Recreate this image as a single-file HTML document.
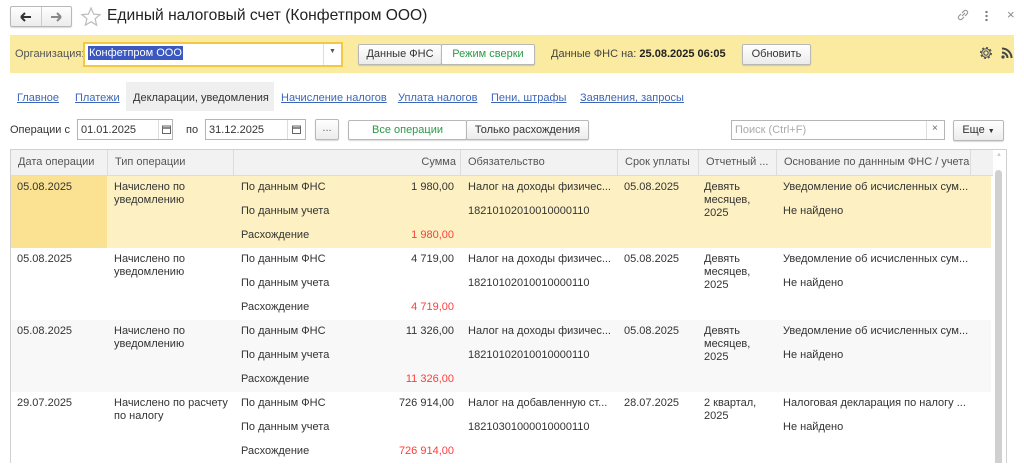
<!DOCTYPE html>
<html><head><meta charset="utf-8"><style>
*{box-sizing:border-box;margin:0;padding:0}
body{width:1024px;height:463px;overflow:hidden;background:#fff;font-family:"Liberation Sans",Arial,sans-serif;font-size:11px;color:#333;position:relative}
.a{position:absolute;white-space:nowrap}
.btn{position:absolute;border:1px solid #b8b8b8;border-radius:2px;background:linear-gradient(#fff,#ececec);box-shadow:0 1px 1px rgba(0,0,0,.15);text-align:center;color:#333}
.lnk{position:absolute;color:#3c66b8;text-decoration:underline;white-space:nowrap}
.inp{position:absolute;border:1px solid #b5b5b5;background:#fff}
.g{color:#2a9a48}
.red{color:#ff3c3c}
.row{position:absolute;left:11px;width:980px;height:72px}
.hd{position:absolute;top:149px;left:10px;width:996px;height:27px;background:#f2f2f2;border:1px solid #d0d0d0;border-bottom:1px solid #dcdcdc}
.hc{position:absolute;top:0;height:26px;line-height:25px;border-right:1px solid #dcdcdc;color:#555;padding-left:7px;overflow:hidden}
</style></head><body>
<div class="btn" style="left:10px;top:6px;width:62px;height:21px;"></div>
<div class="a" style="left:41px;top:7px;width:1px;height:19px;background:#ccc"></div>
<svg class="a" style="left:17px;top:10px" width="50" height="14"><path d="M4 7h10M4 7l4-4M4 7l4 4" stroke="#333" stroke-width="2" fill="none"/><path d="M44 7H34M44 7l-4-4M44 7l-4 4" stroke="#888" stroke-width="2" fill="none"/></svg>
<svg class="a" style="left:80px;top:6px" width="22" height="22"><path d="M11 2l2.6 6.1 6.4.5-4.9 4.2 1.5 6.3L11 15.7 5.4 19.1l1.5-6.3L2 8.6l6.4-.5z" fill="none" stroke="#bbb" stroke-width="1.2"/></svg>
<div class="a" style="left:107px;top:7px;font-size:15.6px;color:#222">Единый налоговый счет (Конфетпром ООО)</div>
<svg class="a" style="left:956px;top:8px" width="14" height="14"><path d="M6 8l3-3M5 6L3 8a2 2 0 003 3l2-2M9 8l2-2a2 2 0 00-3-3L6 5" stroke="#999" stroke-width="1.2" fill="none"/></svg>
<div class="a" style="left:985px;top:10px;width:3px;height:12px;background:radial-gradient(circle,#777 1.1px,transparent 1.3px) 0 0/3px 4px"></div>
<div class="a" style="left:1007px;top:7px;color:#888;font-size:13px">×</div>
<div class="a" style="left:10px;top:35px;width:1004px;height:38px;background:#fbeba0"></div>
<div class="a" style="left:15px;top:48px;color:#555">Организация:</div>
<div class="a" style="left:83px;top:42px;width:260px;height:25px;border:2px solid #f5c842;background:#fff"></div>
<div class="a" style="left:323px;top:44px;width:1px;height:21px;background:#ddd"></div>
<div class="a" style="left:329px;top:48px;font-size:7px;color:#555">▼</div>
<div class="a" style="left:88px;top:46px;background:#3a58c0;color:#fff;padding:1px 1px;font-size:11px">Конфетпром ООО</div>
<div class="btn" style="left:358px;top:44px;width:84px;height:21px;line-height:19px">Данные ФНС</div>
<div class="btn g" style="left:441px;top:44px;width:94px;height:21px;line-height:19px;background:#fff">Режим сверки</div>
<div class="a" style="left:551px;top:48px;color:#444">Данные ФНС на: <b style="color:#222">25.08.2025 06:05</b></div>
<div class="btn" style="left:742px;top:44px;width:69px;height:21px;line-height:19px">Обновить</div>
<svg class="a" style="left:979px;top:46px" width="14" height="14"><circle cx="7" cy="7" r="2.2" fill="none" stroke="#555" stroke-width="1.2"/><circle cx="7" cy="7" r="5" fill="none" stroke="#555" stroke-width="2" stroke-dasharray="2 1.9"/><circle cx="7" cy="7" r="4.2" fill="none" stroke="#555" stroke-width="1"/></svg>
<svg class="a" style="left:1001px;top:47px" width="12" height="12"><circle cx="2" cy="10" r="1.6" fill="#444"/><path d="M1 5.5a5.5 5.5 0 015.5 5.5M1 1.5a9.5 9.5 0 019.5 9.5" stroke="#444" stroke-width="2" fill="none"/></svg>
<div class="lnk" style="left:17px;top:92px">Главное</div>
<div class="lnk" style="left:75px;top:92px">Платежи</div>
<div class="a" style="left:126px;top:82px;width:148px;height:29px;background:#efefef"></div>
<div class="a" style="left:133px;top:92px;color:#333">Декларации, уведомления</div>
<div class="lnk" style="left:281px;top:92px">Начисление налогов</div>
<div class="lnk" style="left:398px;top:92px">Уплата налогов</div>
<div class="lnk" style="left:491px;top:92px">Пени, штрафы</div>
<div class="lnk" style="left:580px;top:92px">Заявления, запросы</div>
<div class="a" style="left:10px;top:124px;color:#333">Операции с</div>
<div class="inp" style="left:77px;top:119px;width:96px;height:21px"></div>
<div class="a" style="left:81px;top:124px">01.01.2025</div>
<div class="a" style="left:158px;top:120px;width:1px;height:19px;background:#ddd"></div>
<svg class="a" style="left:162px;top:125px" width="9" height="9"><rect x=".5" y="1" width="8" height="7.5" fill="none" stroke="#666"/><path d="M.5 3h8" stroke="#666" stroke-width="1.5"/></svg>
<div class="a" style="left:186px;top:124px">по</div>
<div class="inp" style="left:205px;top:119px;width:101px;height:21px"></div>
<div class="a" style="left:209px;top:124px">31.12.2025</div>
<div class="a" style="left:287px;top:120px;width:1px;height:19px;background:#ddd"></div>
<svg class="a" style="left:292px;top:125px" width="9" height="9"><rect x=".5" y="1" width="8" height="7.5" fill="none" stroke="#666"/><path d="M.5 3h8" stroke="#666" stroke-width="1.5"/></svg>
<div class="btn" style="left:315px;top:119px;width:24px;height:21px;line-height:17px;color:#666">...</div>
<div class="btn g" style="left:348px;top:120px;width:119px;height:20px;line-height:18px;background:#fff">Все операции</div>
<div class="btn" style="left:466px;top:120px;width:123px;height:20px;line-height:18px">Только расхождения</div>
<div class="inp" style="left:731px;top:120px;width:214px;height:20px"></div>
<div class="a" style="left:735px;top:124px;color:#aaa">Поиск (Ctrl+F)</div>
<div class="a" style="left:926px;top:121px;width:1px;height:18px;background:#ddd"></div>
<div class="a" style="left:932px;top:123px;color:#666;font-size:10px">×</div>
<div class="btn" style="left:953px;top:120px;width:51px;height:21px;line-height:19px">Еще <span style="font-size:7px">▼</span></div>
<div class="a" style="left:10px;top:149px;width:997px;height:314px;border:1px solid #d0d0d0;border-bottom:none"></div>
<div class="hd">
<div class="hc" style="left:0;width:97px">Дата операции</div>
<div class="hc" style="left:97px;width:126px">Тип операции</div>
<div class="hc" style="left:223px;width:227px;text-align:right;padding-right:4px">Сумма</div>
<div class="hc" style="left:450px;width:157px">Обязательство</div>
<div class="hc" style="left:607px;width:81px">Срок уплаты</div>
<div class="hc" style="left:688px;width:78px">Отчетный ...</div>
<div class="hc" style="left:766px;width:194px">Основание по даннным ФНС / учета</div>
</div>
<div class="a" style="left:993px;top:150px;width:13px;height:313px;background:#fff"></div>
<div class="a" style="left:996px;top:152px;color:#ccc;font-size:6px">▲</div>
<div class="a" style="left:995px;top:170px;width:7px;height:293px;background:#d0d0d0;border-radius:4px 4px 0 0"></div>

<div class="row" style="top:176px;background:#fdf1c3"><div class="a" style="left:0;top:0;width:96px;height:72px;background:#fbe292"></div></div>
<div class="row" style="top:248px;background:#fff"></div>
<div class="row" style="top:320px;background:#f8f8f8"></div>
<div class="row" style="top:392px;background:#fff"></div>

<div id="rows"></div>
<script>
var data=[
["05.08.2025","Начислено по<br>уведомлению","1 980,00","Налог на доходы физичес...","18210102010010000110","05.08.2025","Девять<br>месяцев,<br>2025","Уведомление об исчисленных сум..."],
["05.08.2025","Начислено по<br>уведомлению","4 719,00","Налог на доходы физичес...","18210102010010000110","05.08.2025","Девять<br>месяцев,<br>2025","Уведомление об исчисленных сум..."],
["05.08.2025","Начислено по<br>уведомлению","11 326,00","Налог на доходы физичес...","18210102010010000110","05.08.2025","Девять<br>месяцев,<br>2025","Уведомление об исчисленных сум..."],
["29.07.2025","Начислено по расчету<br>по налогу","726 914,00","Налог на добавленную ст...","18210301000010000110","28.07.2025","2 квартал,<br>2025","Налоговая декларация по налогу ..."]];
var h="";
data.forEach(function(d,i){var t=176+i*72+5;
h+='<div class="a" style="left:17px;top:'+t+'px">'+d[0]+'</div>';
h+='<div class="a" style="left:114px;top:'+t+'px;line-height:13px">'+d[1]+'</div>';
h+='<div class="a" style="left:241px;top:'+t+'px">По данным ФНС</div>';
h+='<div class="a" style="left:241px;top:'+(t+24)+'px">По данным учета</div>';
h+='<div class="a" style="left:241px;top:'+(t+48)+'px">Расхождение</div>';
h+='<div class="a" style="right:570px;top:'+t+'px">'+d[2]+'</div>';
h+='<div class="a red" style="right:570px;top:'+(t+48)+'px">'+d[2]+'</div>';
h+='<div class="a" style="left:468px;top:'+t+'px">'+d[3]+'</div>';
h+='<div class="a" style="left:468px;top:'+(t+24)+'px">'+d[4]+'</div>';
h+='<div class="a" style="left:624px;top:'+t+'px">'+d[5]+'</div>';
h+='<div class="a" style="left:704px;top:'+t+'px;line-height:13px">'+d[6]+'</div>';
h+='<div class="a" style="left:783px;top:'+t+'px">'+d[7]+'</div>';
h+='<div class="a" style="left:783px;top:'+(t+24)+'px">Не найдено</div>';
});
document.getElementById("rows").innerHTML=h;
</script>
</body></html>
